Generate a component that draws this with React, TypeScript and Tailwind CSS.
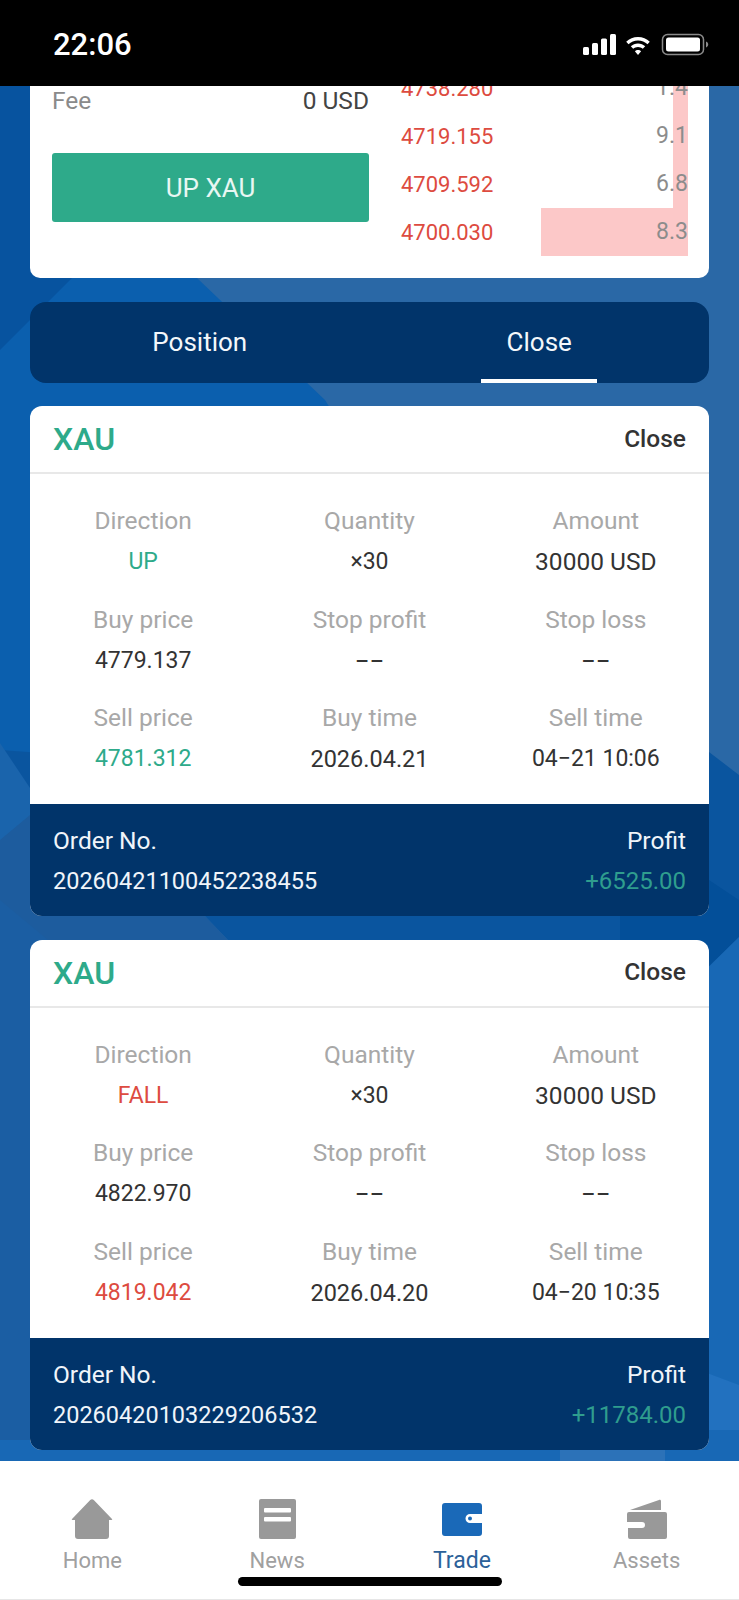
import React from "react";

interface IField {
  label: string;
  value: string;
  color?: string;
  size?: string;
}

interface IOrder {
  fields: IField[];
  orderNo: string;
  profit: string;
}

const GREEN = "text-[#2eaa8a]";
const RED = "text-[#dd4b40]";

const orders: IOrder[] = [
  {
    fields: [
      { label: "Direction", value: "UP", color: GREEN },
      { label: "Quantity", value: "×30" },
      { label: "Amount", value: "30000 USD", size: "text-[24.5px]" },
      { label: "Buy price", value: "4779.137" },
      { label: "Stop profit", value: "−−", size: "text-[26px]" },
      { label: "Stop loss", value: "−−", size: "text-[26px]" },
      { label: "Sell price", value: "4781.312", color: GREEN },
      { label: "Buy time", value: "2026.04.21", size: "text-[23.5px]" },
      { label: "Sell time", value: "04−21 10:06" },
    ],
    orderNo: "20260421100452238455",
    profit: "+6525.00",
  },
  {
    fields: [
      { label: "Direction", value: "FALL", color: RED },
      { label: "Quantity", value: "×30" },
      { label: "Amount", value: "30000 USD", size: "text-[24.5px]" },
      { label: "Buy price", value: "4822.970" },
      { label: "Stop profit", value: "−−", size: "text-[26px]" },
      { label: "Stop loss", value: "−−", size: "text-[26px]" },
      { label: "Sell price", value: "4819.042", color: RED },
      { label: "Buy time", value: "2026.04.20", size: "text-[23.5px]" },
      { label: "Sell time", value: "04−20 10:35" },
    ],
    orderNo: "20260420103229206532",
    profit: "+11784.00",
  },
];

const depth = [
  { price: "4738.280", qty: "1.4", bar: 15 },
  { price: "4719.155", qty: "9.1", bar: 15 },
  { price: "4709.592", qty: "6.8", bar: 15 },
  { price: "4700.030", qty: "8.3", bar: 147 },
];

const Background = () => (
  <svg className="absolute inset-0" width="739" height="1600" viewBox="0 0 739 1600">
    <rect width="739" height="1600" fill="#0a559f" />
    <polygon points="0,86 110,86 340,406 420,780 0,750" fill="#0b5fae" />
    <polygon points="0,86 130,86 72,278 0,350" fill="#07539f" />
    <polygon points="100,86 739,86 739,775 709,752 500,680 325,400 197,278 100,180" fill="#2a68a6" />
    <polygon points="0,743 30,788 120,800 205,916 228,940 228,1100 0,1100" fill="#1a64ac" />
    <polygon points="0,840 30,815 120,800 205,916 228,940 228,1200 0,1300" fill="#1d5c9e" />
    <polygon points="620,916 709,880 739,900 739,937 700,975 620,960" fill="#034f99" />
    <polygon points="228,1100 690,985 739,937 739,1461 0,1461 0,1300" fill="#1868b5" />
    <polygon points="0,900 120,1000 120,1440 0,1440" fill="#1b5ea3" />
    <rect x="560" y="1440" width="105" height="21" fill="#2c72b8" />
    <polygon points="699,1370 739,1385 739,1430 699,1430" fill="#2271bf" />
  </svg>
);

const StatusBar = () => (
  <div className="flex h-[86px] shrink-0 items-center justify-between bg-black pl-[53px] pr-[30px] pt-[4px] text-white">
    <span className="text-[31px] font-medium leading-[36px]">22:06</span>
    <svg width="126" height="24" viewBox="0 0 126 24" fill="white">
      <rect x="0" y="14" width="6" height="8" rx="1.5" />
      <rect x="9" y="10" width="6" height="12" rx="1.5" />
      <rect x="18" y="5.5" width="6" height="16.5" rx="1.5" />
      <rect x="27" y="1" width="6" height="21" rx="1.5" />
      <path d="M55 4c4.6 0 8.7 1.8 11.8 4.7l-2.3 2.5C62 8.9 58.7 7.5 55 7.5s-7 1.4-9.5 3.7l-2.3-2.5C46.3 5.8 50.4 4 55 4z" />
      <path d="M55 10.5c2.8 0 5.3 1.1 7.2 2.8l-2.4 2.5c-1.3-1.1-3-1.8-4.8-1.8s-3.5.7-4.8 1.8l-2.4-2.5c1.9-1.7 4.4-2.8 7.2-2.8z" />
      <path d="M55 17c1.2 0 2.3.5 3.1 1.2L55 22l-3.1-3.8c.8-.7 1.9-1.2 3.1-1.2z" />
      <rect x="79.5" y="1.5" width="41" height="20" rx="5" fill="none" stroke="#8a8a8a" strokeWidth="1.5" />
      <rect x="83" y="4.5" width="34" height="14" rx="2.5" />
      <path d="M123 8.5c1.3.4 2.2 1.6 2.2 3s-.9 2.6-2.2 3z" fill="#8a8a8a" />
    </svg>
  </div>
);

const TopCard = () => (
  <div className="-mt-[22px] flex gap-[32px] rounded-[10px] bg-white pb-[22px] pl-[22px] pr-[21px]">
    <div className="w-[317px] pt-[21px]">
      <div className="flex items-center justify-between text-[24.5px] leading-[32px]">
        <span className="text-[#8a8a8a]">Fee</span>
        <span className="text-[#444444]">0 USD</span>
      </div>
      <button className="mt-[36px] h-[69px] w-full rounded-[3px] bg-[#2eaa8a] pt-[1px] text-[26px] text-[#e8f7f3]">
        UP XAU
      </button>
    </div>
    <div className="flex-1">
      {depth.map((row) => (
        <div key={row.price} className="relative flex h-[48px] items-center justify-between text-[23px]">
          <div className="absolute inset-y-0 right-0 bg-[#fcc8c8]" style={{ width: row.bar }} />
          <span className={`relative text-[22px] ${RED}`}>{row.price}</span>
          <span className="relative text-[#8c8c8c]">{row.qty}</span>
        </div>
      ))}
    </div>
  </div>
);

const Tabs = () => (
  <div className="relative mt-[24px] grid h-[80.5px] grid-cols-2 rounded-[16px] bg-[#01346a] pt-[1px] text-[26px] text-[#f4f8fb]">
    <div className="flex items-center justify-center">Position</div>
    <div className="relative flex items-center justify-center">
      Close
      <div className="absolute bottom-0 left-1/2 h-[4px] w-[116px] -translate-x-1/2 bg-white" />
    </div>
  </div>
);

const OrderCard: React.FC<{ order: IOrder }> = ({ order }) => (
  <div className="mt-[23.5px] overflow-hidden rounded-[12px] bg-white">
    <div className="flex h-[68px] items-center justify-between border-b-2 border-[#e8e8e8] px-[23px]">
      <span className={`text-[32px] font-medium ${GREEN}`}>XAU</span>
      <span className="text-[24.5px] font-medium text-[#333333]">Close</span>
    </div>
    <div className="grid grid-cols-3 gap-y-[25.5px] pb-[29px] pt-[31px] text-center">
      {order.fields.map((f) => (
        <div key={f.label}>
          <div className="text-[24.5px] leading-[32px] text-[#a8a8a8]">{f.label}</div>
          <div className={`mt-[9px] leading-[32px] ${f.size ?? "text-[23px]"} ${f.color ?? "text-[#333333]"}`}>
            {f.value}
          </div>
        </div>
      ))}
    </div>
    <div className="flex h-[112px] items-start justify-between bg-[#01346a] px-[23px] pt-[21px] leading-[32px] text-[#f0f5fa]">
      <div>
        <div className="text-[24.5px]">Order No.</div>
        <div className="mt-[8px] text-[23.5px]">{order.orderNo}</div>
      </div>
      <div className="text-right">
        <div className="text-[24.5px]">Profit</div>
        <div className="mt-[8px] text-[24px] text-[#2f9d8e]">{order.profit}</div>
      </div>
    </div>
  </div>
);

const HomeIcon = () => (
  <svg width="42" height="40" viewBox="0 0 42 40" fill="#999999">
    <path d="M19 1.2a3 3 0 0 1 4 0L41 20c.5.6.2 1-.5 1H38v16a3 3 0 0 1-3 3H7a3 3 0 0 1-3-3V21H1.500c-.7 0-1-.4-.5-1z" />
  </svg>
);

const NewsIcon = () => (
  <svg width="37" height="40" viewBox="0 0 37 40">
    <rect width="37" height="40" rx="2" fill="#999999" />
    <rect x="5" y="9" width="27" height="4.5" rx="1" fill="white" />
    <rect x="5" y="18" width="27" height="4.5" rx="1" fill="white" />
  </svg>
);

const TradeIcon = () => (
  <svg width="40" height="33" viewBox="0 0 40 33">
    <path d="M3 0h34a3 3 0 0 1 3 3v8H28a4.5 4.5 0 0 0 0 9h12v10a3 3 0 0 1-3 3H3a3 3 0 0 1-3-3V3a3 3 0 0 1 3-3z" fill="#1a69b8" />
    <circle cx="28" cy="15.5" r="2" fill="#1a69b8" />
  </svg>
);

const AssetsIcon = () => (
  <svg width="40" height="40" viewBox="0 0 40 40" fill="#999999">
    <path d="M3 11 32 1c1-.4 2 .2 2 1.2V11z" />
    <path d="M2 13h36a2 2 0 0 1 2 2v23a2 2 0 0 1-2 2H3a2 2 0 0 1-2-2v-9h14a3 3 0 0 0 0-6H0v-8a2 2 0 0 1 2-2z" />
  </svg>
);

const tabs = [
  { label: "Home", icon: <HomeIcon /> },
  { label: "News", icon: <NewsIcon /> },
  { label: "Trade", icon: <TradeIcon />, active: true },
  { label: "Assets", icon: <AssetsIcon /> },
];

const BottomNav = () => (
  <div className="relative grid h-[139px] shrink-0 grid-cols-4 border-b border-[#e6e6e6] bg-white pt-[38px]">
    {tabs.map((t) => (
      <div key={t.label} className="flex flex-col items-center">
        <div className="flex h-[40px] items-center justify-center">{t.icon}</div>
        <span className={`mt-[8px] leading-[28px] ${t.active ? "text-[23px] text-[#2c6199]" : "text-[22px] text-[#a0a0a0]"}`}>
          {t.label}
        </span>
      </div>
    ))}
    <div className="absolute bottom-[13px] left-[238px] h-[9px] w-[264px] rounded-full bg-black" />
  </div>
);

export default function App() {
  return (
    <div className="relative flex h-[1600px] w-[739px] flex-col overflow-hidden font-['Roboto',sans-serif]">
      <Background />
      <div className="relative z-10">
        <StatusBar />
      </div>
      <div className="relative flex-1 overflow-hidden px-[30px]">
        <TopCard />
        <Tabs />
        {orders.map((o) => (
          <OrderCard key={o.orderNo} order={o} />
        ))}
      </div>
      <div className="relative z-10">
        <BottomNav />
      </div>
    </div>
  );
}
